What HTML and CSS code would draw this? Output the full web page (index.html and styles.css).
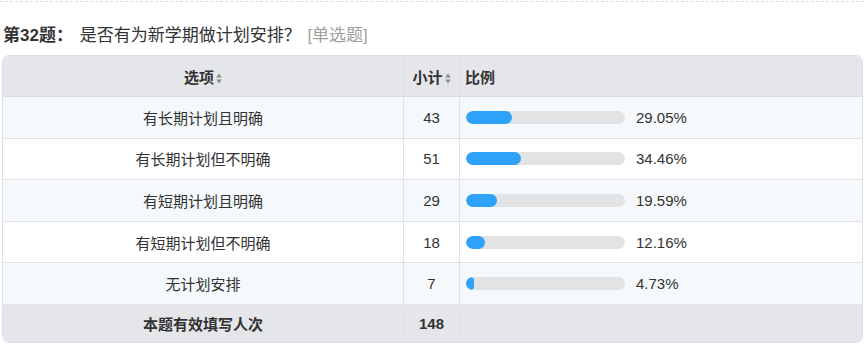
FILE: index.html
```html
<!DOCTYPE html>
<html lang="zh-CN">
<head>
<meta charset="utf-8">
<link rel="stylesheet" href="styles.css">
</head>
<body>
<div class="dash"></div>
<div class="title">
  <span class="qno">第32题：</span>
  <span class="qtext">是否有为新学期做计划安排？</span>
  <span class="qtype">[单选题]</span>
</div>
<div class="tablewrap">
<table class="stat">
  <colgroup>
    <col class="c1"><col class="c2"><col class="c3">
  </colgroup>
  <thead>
    <tr>
      <th class="center">选项<svg class="sort" width="6" height="11" viewBox="0 0 6 11"><path d="M3 0.5 L5.8 4.5 H0.2 Z M3 10.5 L5.8 6.5 H0.2 Z" fill="#8c8c8c"/></svg></th>
      <th class="center bl">小计<svg class="sort" width="6" height="11" viewBox="0 0 6 11"><path d="M3 0.5 L5.8 4.5 H0.2 Z M3 10.5 L5.8 6.5 H0.2 Z" fill="#8c8c8c"/></svg></th>
      <th class="left bl">比例</th>
    </tr>
  </thead>
  <tbody>
    <tr class="odd"><td>有长期计划且明确</td><td class="bl num">43</td><td class="bl"><div class="barcell"><div class="bar"><div class="fill" style="width:29.05%"></div></div><span class="pct">29.05%</span></div></td></tr>
    <tr><td>有长期计划但不明确</td><td class="bl num">51</td><td class="bl"><div class="barcell"><div class="bar"><div class="fill" style="width:34.46%"></div></div><span class="pct">34.46%</span></div></td></tr>
    <tr class="odd"><td>有短期计划且明确</td><td class="bl num">29</td><td class="bl"><div class="barcell"><div class="bar"><div class="fill" style="width:19.59%"></div></div><span class="pct">19.59%</span></div></td></tr>
    <tr><td>有短期计划但不明确</td><td class="bl num">18</td><td class="bl"><div class="barcell"><div class="bar"><div class="fill" style="width:12.16%"></div></div><span class="pct">12.16%</span></div></td></tr>
    <tr class="odd"><td>无计划安排</td><td class="bl num">7</td><td class="bl"><div class="barcell"><div class="bar"><div class="fill" style="width:4.73%;min-width:7px"></div></div><span class="pct">4.73%</span></div></td></tr>
  </tbody>
  <tfoot>
    <tr><td>本题有效填写人次</td><td class="bl num">148</td><td class="bl"></td></tr>
  </tfoot>
</table>
</div>
</body>
</html>
```

FILE: styles.css
```css
html, body {
  margin: 0;
  padding: 0;
  background: #ffffff;
}
body {
  width: 864px;
  height: 345px;
  overflow: hidden;
  font-family: "Liberation Sans", "Noto Sans CJK SC", sans-serif;
  color: #333333;
}
.dash {
  margin-top: 1px;
  height: 0;
  border-top: 1px dashed #dddddd;
}
.title {
  margin-top: 21px;
  margin-left: 3px;
  height: 26px;
  line-height: 26px;
  font-size: 17px;
  white-space: nowrap;
}
.qno {
  font-weight: bold;
  color: #333333;
}
.qtext {
  margin-left: 2px;
  color: #333333;
}
.qtype {
  margin-left: 2px;
  color: #a0a0a0;
}
.tablewrap {
  margin-top: 6px;
  margin-left: 2px;
  width: 859px;
  border: 1px solid #dcdee2;
  border-radius: 7px;
  overflow: hidden;
}
.stat {
  width: 100%;
  border-collapse: separate;
  border-spacing: 0;
  table-layout: fixed;
  font-size: 15px;
}
.c1 { width: 400px; }
.c2 { width: 56px; }
.c3 { width: auto; }
.stat th {
  background: #e4e6ea;
  height: 40px;
  padding: 0;
  font-weight: bold;
  color: #333333;
  border-bottom: 1px solid #dcdee2;
}
.stat th.center { text-align: center; }
.stat th.left { text-align: left; padding-left: 5px; }
.sort {
  margin-left: 2px;
  vertical-align: -1px;
}
.stat td {
  height: 40.6px;
  padding: 0;
  text-align: center;
  border-bottom: 1px solid #dfe1e5;
  color: #333333;
}
.stat tbody tr td { background: #ffffff; }
.stat tbody tr.odd td { background: #f5f9fc; }
.stat .bl { border-left: 1px solid #dfe1e5; }
.stat td.num { text-align: center; }
.stat tfoot td {
  background: #e4e6ea;
  height: 37px;
  font-weight: bold;
  border-bottom: none;
}
.barcell {
  display: flex;
  align-items: center;
  padding-left: 6px;
}
.bar {
  width: 159px;
  height: 13px;
  border-radius: 7px;
  background: #e2e3e5;
  overflow: hidden;
}
.fill {
  height: 100%;
  background: #2ea1f8;
  border-radius: 7px;
}
.pct {
  margin-left: 11px;
  color: #333333;
}
```
